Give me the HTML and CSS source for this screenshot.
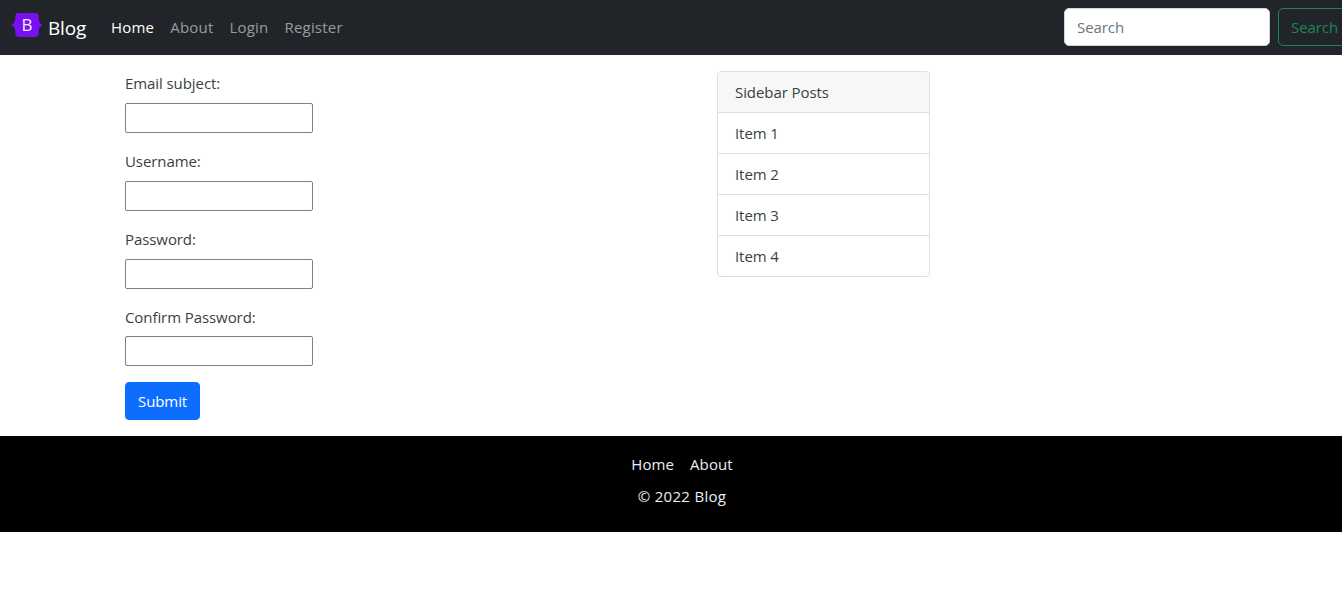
FILE: index.html
```html
<!DOCTYPE html>
<html lang="en">
<head>
<meta charset="utf-8">
<title>Blog</title>
<link rel="stylesheet" href="styles.css">
</head>
<body>
<nav class="navbar">
  <a class="brand" href="#">
    <span class="logo">
      <svg width="30" height="24" viewBox="0 0 118 94" aria-hidden="true"><path class="logo-shape" d="M24.509 0c-6.733 0-11.715 5.893-11.492 12.284.214 6.14-.064 14.092-2.066 20.577C8.943 39.365 5.547 43.485 0 44.014v5.972c5.547.529 8.943 4.649 10.951 11.153 2.002 6.485 2.28 14.437 2.066 20.577C12.794 88.106 17.776 94 24.51 94H93.5c6.733 0 11.714-5.893 11.491-12.284-.214-6.14.064-14.092 2.066-20.577 2.009-6.504 5.396-10.624 10.943-11.153v-5.972c-5.547-.529-8.934-4.649-10.943-11.153-2.002-6.484-2.28-14.437-2.066-20.577C105.214 5.894 100.233 0 93.5 0z"/></svg>
      <span class="logo-letter">B</span>
    </span>
    <span class="brand-name">Blog</span>
  </a>
  <ul class="nav">
    <li><a class="nav-link active" href="#">Home</a></li>
    <li><a class="nav-link" href="#">About</a></li>
    <li><a class="nav-link" href="#">Login</a></li>
    <li><a class="nav-link" href="#">Register</a></li>
  </ul>
  <form class="search">
    <input class="search-input" type="search" placeholder="Search">
    <button class="search-btn" type="button">Search</button>
  </form>
</nav>
<main class="content">
  <form class="signup">
    <label class="field-label" for="subject">Email subject:</label>
    <input class="field-input" id="subject" type="text">
    <label class="field-label" for="username">Username:</label>
    <input class="field-input" id="username" type="text">
    <label class="field-label" for="password">Password:</label>
    <input class="field-input" id="password" type="password">
    <label class="field-label field-label-tight" for="confirm">Confirm Password:</label>
    <input class="field-input" id="confirm" type="password">
    <button class="submit" type="button">Submit</button>
  </form>
  <aside class="card">
    <div class="card-header">Sidebar Posts</div>
    <ul class="list">
      <li class="list-item">Item 1</li>
      <li class="list-item">Item 2</li>
      <li class="list-item">Item 3</li>
      <li class="list-item">Item 4</li>
    </ul>
  </aside>
</main>
<footer class="footer">
  <div class="footer-links">
    <a href="#">Home</a>
    <a href="#">About</a>
  </div>
  <p class="copyright">© 2022 Blog</p>
</footer>
</body>
</html>
```

FILE: styles.css
```css
* { box-sizing: border-box; }
html { overflow-x: hidden; }
body {
  margin: 0;
  width: 1342px;
  overflow-x: hidden;
  font-family: "Open Sans", "Noto Sans", sans-serif;
  font-size: 15px;
  letter-spacing: -0.08px;
  line-height: 24px;
  color: #3a3f44;
  background: #fff;
}
a { text-decoration: none; }
ul { list-style: none; margin: 0; padding: 0; }

.navbar {
  display: flex;
  align-items: center;
  height: 55px;
  padding-left: 12px;
  background: #212529;
}
.brand { display: flex; align-items: center; color: #fff; margin-right: 16px; }
.logo { position: relative; display: block; width: 30px; height: 24px; margin-top: -5px; }
.logo svg { display: block; }
.logo-shape { fill: #7a10f2; }
.logo-letter {
  position: absolute;
  inset: 0;
  text-align: center;
  font-size: 17px;
  line-height: 24px;
  color: #f4ecff;
}
.brand-name { font-size: 19px; margin-left: 6px; letter-spacing: -0.2px; }
.nav { display: flex; margin-top: -1px; margin-left: 1px; }
.nav-link { display: block; padding: 8px; letter-spacing: 0.2px; color: rgba(255,255,255,.55); }
.nav-link.active { color: #fff; }
.search { display: flex; margin-left: auto; margin-top: -2px; flex: none; width: 278px; gap: 8px; }
.search-input {
  width: 206px;
  flex: none;
  height: 38px;
  padding: 6px 12px;
  border: 1px solid #ced4da;
  border-radius: 5px;
  font: inherit;
  letter-spacing: inherit;
  color: #212529;
  background: #fff;
}
.search-input::placeholder { color: #6c757d; }
.search-btn {
  flex: none;
  width: 75px;
  height: 38px;
  padding: 6px 12px;
  border: 1px solid #198754;
  border-radius: 5px;
  font: inherit;
  letter-spacing: inherit;
  text-align: left;
  color: #198754;
  background: transparent;
}

.content {
  display: flex;
  align-items: flex-start;
  height: 381px;
  padding: 16px 0 0 125px;
}
.signup { display: flex; flex-direction: column; align-items: flex-start; width: 592px; }
.field-label { display: block; margin-bottom: 8px; }
.field-label-tight { margin-bottom: 7px; }
.field-input {
  display: block;
  width: 188px;
  height: 30px;
  margin-bottom: 16px;
  padding: 1px 2px;
  border: 1px solid #808080;
  border-radius: 2px;
  background: #fff;
}
.submit {
  width: 75px;
  height: 38px;
  padding: 6px 12px;
  border: 1px solid #0d6efd;
  border-radius: 4px;
  font: inherit;
  letter-spacing: inherit;
  color: #fff;
  background: #0d6efd;
}

.card {
  width: 213px;
  border: 1px solid #dfdfdf;
  border-radius: 4px;
  overflow: hidden;
}
.card-header {
  height: 41px;
  padding: 8px 16px 8px 17px;
  background: #f7f7f7;
  border-bottom: 1px solid #dfdfdf;
}
.list-item {
  height: 41px;
  padding: 8px 16px 8px 17px;
  border-bottom: 1px solid #dfdfdf;
}
.list-item:last-child { height: 40px; border-bottom: 0; }

.footer {
  height: 96px;
  padding: 16px 0 0 22px;
  background: #000;
  color: #eceef0;
  text-align: center;
}
.footer-links { display: flex; justify-content: center; gap: 16px; margin-bottom: 8px; letter-spacing: 0.1px; }
.footer-links a { color: #eceef0; }
.copyright { margin: 0; letter-spacing: 0.3px; }
```
